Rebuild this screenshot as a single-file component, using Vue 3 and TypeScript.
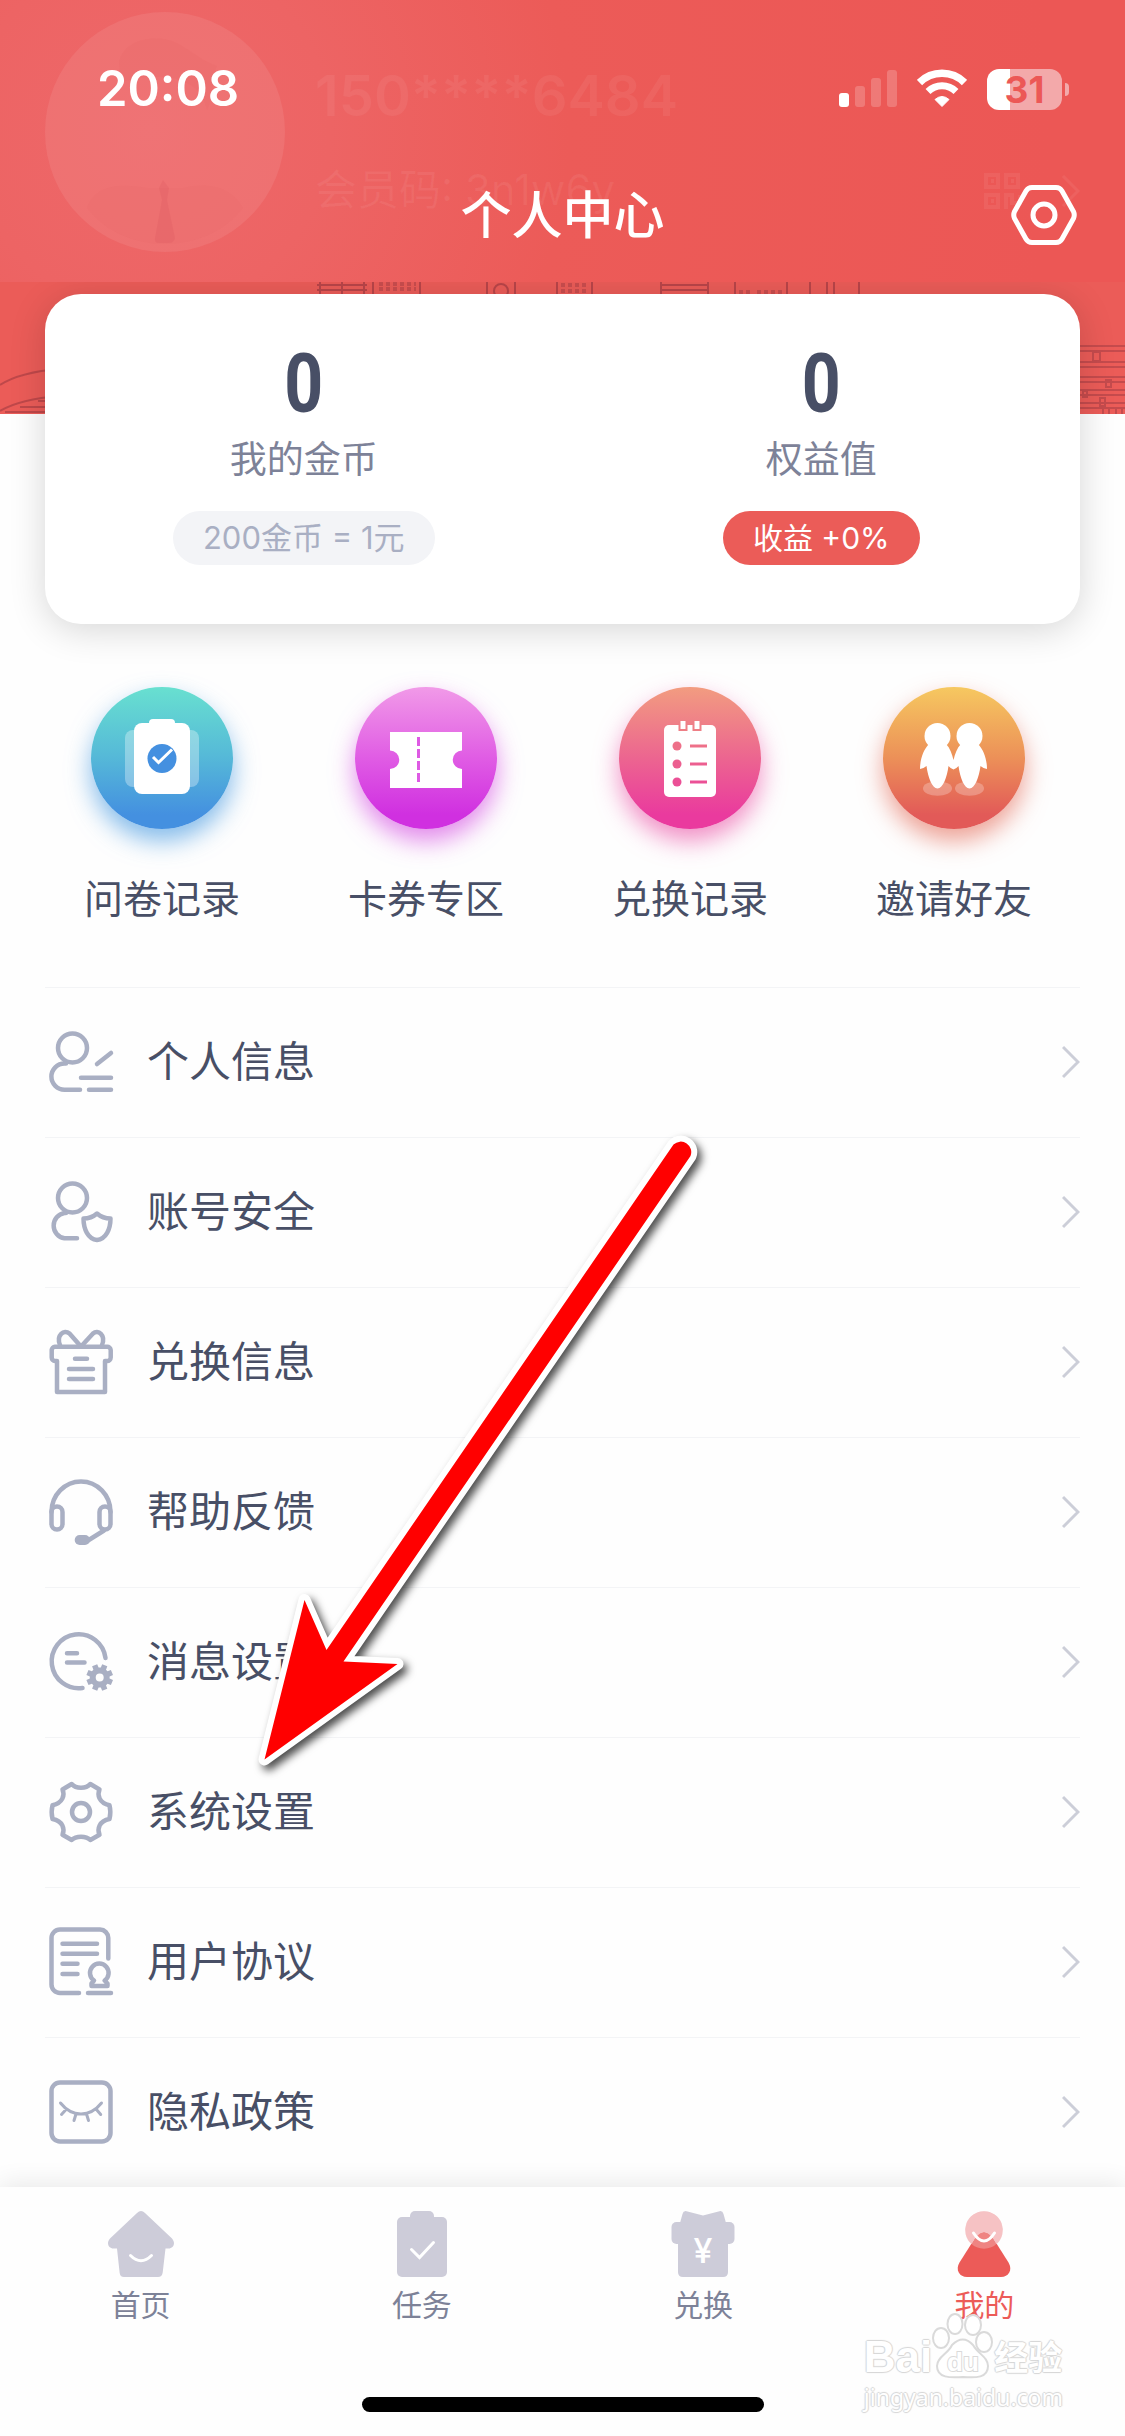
<script setup lang="ts">
interface Shape {
  d: string
  fill?: boolean
  width?: number
}

interface MenuItem {
  label: string
  shapes: Shape[]
}

interface Shortcut {
  label: string
  kind: 'survey' | 'coupon' | 'records' | 'invite'
}

interface Tab {
  label: string
  kind: 'home' | 'task' | 'swap' | 'mine'
}

const circle = (cx: number, cy: number, r: number): string =>
  `M${cx - r} ${cy}a${r} ${r} 0 1 0 ${r * 2} 0a${r} ${r} 0 1 0 ${-r * 2} 0Z`

const cog = (cx: number, cy: number, outer: number, inner: number, teeth: number): string => {
  const step = (Math.PI * 2) / teeth
  const points: string[] = []
  for (let i = 0; i < teeth; i++) {
    const angle = i * step + step / 2
    const corners: [number, number][] = [
      [-0.36, inner],
      [-0.26, outer],
      [0.26, outer],
      [0.36, inner],
    ]
    for (const [offset, radius] of corners) {
      const a = angle + offset * step
      points.push(`${(cx + Math.cos(a) * radius).toFixed(1)} ${(cy + Math.sin(a) * radius).toFixed(1)}`)
    }
  }
  return `M${points.join('L')}Z`
}

const shortcuts: Shortcut[] = [
  { label: '问卷记录', kind: 'survey' },
  { label: '卡券专区', kind: 'coupon' },
  { label: '兑换记录', kind: 'records' },
  { label: '邀请好友', kind: 'invite' },
]

const menu: MenuItem[] = [
  {
    label: '个人信息',
    shapes: [
      { d: circle(27.5, 22, 14.5) },
      { d: 'M21 37.5H19.5A13 13 0 0 0 19.5 63.7H35M36 51.7H66M44 63.7H66M52 38L66 27' },
    ],
  },
  {
    label: '账号安全',
    shapes: [
      { d: circle(27.5, 22, 14.5) },
      { d: 'M21 37H19.5A12.8 12.8 0 0 0 19.5 62.3H32' },
      { d: 'M52 37.5C48 41 43.500 42.500 38.500 42.500C38.500 53 43 63 52 64C61 63 65.500 53 65.500 42.500C60.500 42.500 56 41 52 37.500Z' },
    ],
  },
  {
    label: '兑换信息',
    shapes: [
      { d: 'M12 35H10A3.500 3.500 0 0 1 6.700 31.500V24A3.500 3.500 0 0 1 10 20.700H62A3.500 3.500 0 0 1 65.700 24V31.500A3.500 3.500 0 0 1 62 35H60V66H12Z' },
      { d: 'M35.500 20L24.500 7.500C19 3 11 9 15 19M36.500 20L48 7.500C53 3 61 9 57 19' },
      { d: 'M30 32.700H42M24 43H48M24 53H48' },
    ],
  },
  {
    label: '帮助反馈',
    shapes: [
      { d: 'M6.500 36A29.500 30.500 0 0 1 65.500 36' },
      { d: 'M12 30.500A5.500 5.500 0 0 1 17.500 36V48A5.500 5.500 0 0 1 12 53.500A5.500 5.500 0 0 1 6.500 48V36A5.500 5.500 0 0 1 12 30.500Z' },
      { d: 'M60 30.500A5.500 5.500 0 0 1 65.500 36V48A5.500 5.500 0 0 1 60 53.500A5.500 5.500 0 0 1 54.500 48V36A5.500 5.500 0 0 1 60 30.500Z' },
      { d: 'M59 54.500L43 64.500' },
      { d: 'M34.700 59H40A5 5 0 0 1 40 69H34.700A5 5 0 0 1 34.700 59Z', fill: true },
    ],
  },
  {
    label: '消息设置',
    shapes: [
      { d: 'M60.500 32A27 27 0 1 0 37.500 62' },
      { d: 'M22 27.300H32M22 36.500H39.500' },
      { d: cog(54.7, 51.5, 13.5, 10, 8) + circle(54.7, 51.5, 4), fill: true },
    ],
  },
  {
    label: '系统设置',
    shapes: [
      {
        d: 'M26.700 8L17.500 13.500C20 19 18 27 7.500 29.300C6.300 34 6.300 38 7.500 43C18 45 20 53 17.500 58.700L26.700 64C31 59.500 41 59.500 45.300 64L54.500 58.700C52 53 54 45 64.500 43C65.700 38 65.700 34 64.500 29.300C54 27 52 19 54.500 13.500L45.300 8C41 13 31 13 26.700 8Z',
      },
      { d: circle(36, 36, 9) },
    ],
  },
  {
    label: '用户协议',
    shapes: [
      { d: 'M63.300 32.500V12A8.500 8.500 0 0 0 55 3.500H15A8.500 8.500 0 0 0 6.500 12V58.500A8.500 8.500 0 0 0 15 67H34M43 67H66M17.500 17.700H52M17.500 27.700H52M17.500 37.700H32.500M17.500 48H32.500' },
      { d: 'M49 54.500A9.300 9.300 0 1 1 59.600 54.500L62.500 57.500V60H46.500V57.500Z' },
    ],
  },
  {
    label: '隐私政策',
    shapes: [
      { d: 'M15 6.500H57A8.500 8.500 0 0 1 65.500 15V57A8.500 8.500 0 0 1 57 65.500H15A8.500 8.500 0 0 1 6.500 57V15A8.500 8.500 0 0 1 15 6.500Z' },
      { d: 'M15.500 27C27 41.500 45 41.500 56.500 27M21.500 33L16.500 38.500M31 38L29 44.500M41.500 38L43.500 44.500M51 33L55.700 38.500', width: 3 },
    ],
  },
]

const tabs: Tab[] = [
  { label: '首页', kind: 'home' },
  { label: '任务', kind: 'task' },
  { label: '兑换', kind: 'swap' },
  { label: '我的', kind: 'mine' },
]
</script>

<template>
  <div class="page">
    <header class="top">
      <div class="profile" aria-hidden="true">
        <svg class="avatar" viewBox="0 0 240 240">
          <circle cx="120" cy="120" r="120" fill="#ffffff" fill-opacity=".08" />
          <path d="M74 52C76 28 110 20 134 32C150 42 160 50 172 54C166 66 170 84 162 98C156 66 120 58 76 70Z" fill="#e25558" fill-opacity=".1" />
          <path d="M42 196C50 170 80 172 104 176H138C170 168 190 180 198 196C180 220 150 232 120 232C90 232 60 220 42 196Z" fill="#e25558" fill-opacity=".06" />
          <path d="M118 168L124 176L122 188L130 226Q129 231 124 231H114Q109 231 110 226L117 188L114 176Z" fill="#d9505a" fill-opacity=".2" />
        </svg>
        <div class="who">
          <span class="phone">150****6484</span>
          <span class="code">会员码: 3n1w6y</span>
        </div>
        <svg class="qr" viewBox="0 0 96 36" fill="none" stroke="#ffffff" stroke-width="4">
          <path d="M2 2h12v12h-12zM22 2h12v12h-12zM2 22h12v12h-12zM22 36v-14h6v8h8v-8M7 8h3M27 8h3M7 28h3" />
          <path d="M79 3l15 15l-15 15" stroke-width="3" />
        </svg>
      </div>

      <div class="status">
        <span class="clock">20:08</span>
        <div class="signals">
          <svg width="58" height="42" viewBox="0 0 58 42" fill="#ffffff">
            <rect x="0" y="25" width="10" height="14" rx="3" />
            <g fill-opacity=".2">
              <rect x="16" y="18" width="10" height="21" rx="3" />
              <rect x="32" y="10" width="10" height="29" rx="3" />
              <rect x="48" y="2" width="10" height="37" rx="3" />
            </g>
          </svg>
          <svg width="50" height="42" viewBox="0 0 50 42">
            <path d="M2.500 14.500A32 32 0 0 1 47.500 14.500" fill="none" stroke="#ffffff" stroke-width="7.500" />
            <path d="M11 23.500A20 20 0 0 1 39 23.500" fill="none" stroke="#ffffff" stroke-width="7" />
            <path d="M25 38.500L18 31.500Q25 25.500 32 31.500Z" fill="#ffffff" stroke="#ffffff" stroke-width="1" stroke-linejoin="round" />
          </svg>
          <div class="battery"><span>31</span></div>
        </div>
      </div>

      <div class="bar">
        <h1>个人中心</h1>
        <button class="gear" type="button" aria-label="设置">
          <svg width="66" height="60" viewBox="0 0 66 60" fill="none" stroke="#ffffff" stroke-width="5">
            <path d="M21 2.500H45Q49 2.500 51 6L62.500 26.500Q64 30 62.500 33.500L51 54Q49 57.500 45 57.500H21Q17 57.500 15 54L3.500 33.500Q2 30 3.500 26.500L15 6Q17 2.500 21 2.500Z" />
            <circle cx="33" cy="30" r="11" />
          </svg>
        </button>
      </div>
    </header>

    <div class="skyline" aria-hidden="true">
      <svg width="60" height="132" viewBox="0 0 60 132" fill="none" stroke="#7d2a38" stroke-opacity=".4" stroke-width="2">
        <path d="M0 103Q20 90 60 87M0 129Q20 117 60 114M5 130H45M20 125H45M38 119H50" />
      </svg>
      <svg width="624" height="12" viewBox="-64 0 624 12" fill="none" stroke="#7d2a38" stroke-opacity=".45" stroke-width="2">
        <path d="M5 0V12M27 0V12M49 0V12M2 3H52M2 8H52M58 0V12M105 0V12M172 0V12M200 0V12M242 0V12M277 0V12M346 0V12M393 0V12M347 3H392M347 8H392M420 0V12M472 0V12M495 0V12M512 0V12M519 0V12M544 0V12" />
        <path d="M64 2H101M64 7H101M246 3H274M246 9H274M424 10H438M442 10H470" stroke-dasharray="4 3" stroke-width="4" stroke-opacity=".3" />
        <circle cx="186" cy="9" r="7" />
      </svg>
      <svg width="60" height="132" viewBox="0 0 60 132" fill="none" stroke="#7d2a38" stroke-opacity=".35" stroke-width="2">
        <path d="M0 64H60M0 69H60M0 80H60M0 85H60M0 95H60M0 100H60M0 108H60M0 113H60M0 121H60M0 126H60M28 70h7v9h-7zM41 98h5v7h-5zM18 109h4v6h-4zM35 116h5v8h-5zM38 127v5M44 127v5M51 127v5M57 127v5" />
      </svg>
    </div>

    <main>
      <section class="card">
        <div class="stat">
          <strong>0</strong>
          <span class="name">我的金币</span>
          <span class="pill rate">200金币 = 1元</span>
        </div>
        <div class="stat">
          <strong>0</strong>
          <span class="name">权益值</span>
          <span class="pill hot">收益 +0%</span>
        </div>
      </section>

      <nav class="shortcuts">
        <a v-for="item in shortcuts" :key="item.kind" href="#">
          <span class="disc" :class="item.kind">
            <svg v-if="item.kind === 'survey'" viewBox="0 0 142 142" fill="#ffffff">
              <rect x="34" y="43" width="74" height="57" rx="8" fill-opacity=".32" />
              <rect x="43" y="36" width="56" height="71" rx="8" />
              <rect x="58" y="32" width="26" height="12" rx="4" />
              <circle cx="71" cy="71.500" r="14.500" fill="#4490e0" />
              <path d="M62 70L67.500 75.500L81 62.500" fill="none" stroke="#ffffff" stroke-width="3" />
            </svg>
            <svg v-else-if="item.kind === 'coupon'" viewBox="0 0 142 142">
              <path d="M35 45H107V63.500A9.200 9.200 0 0 0 107 82V101H35V82A9.200 9.200 0 0 0 35 63.500Z" fill="#ffffff" />
              <path d="M63.500 50V95" stroke="#de5ae4" stroke-width="3" stroke-dasharray="9 3" />
            </svg>
            <svg v-else-if="item.kind === 'records'" viewBox="0 0 142 142">
              <rect x="45" y="38" width="52" height="72" rx="5" fill="#ffffff" />
              <g fill="#ffffff" stroke="#ee7f86" stroke-width="2">
                <path d="M60.500 34V43H67.500V34M74.500 34V43H81.500V34" />
              </g>
              <circle cx="58" cy="59" r="4.500" fill="#ee7089" />
              <circle cx="58" cy="77" r="4.500" fill="#ec5f90" />
              <circle cx="58" cy="95" r="4.500" fill="#eb5096" />
              <path d="M71 59H88" stroke="#ee7089" stroke-width="3" />
              <path d="M71 77H88" stroke="#ec5f90" stroke-width="3" />
              <path d="M71 95H88" stroke="#eb5096" stroke-width="3" />
            </svg>
            <svg v-else viewBox="0 0 142 142" fill="#ffffff">
              <ellipse cx="54.500" cy="101.500" rx="14.500" ry="7.300" fill-opacity=".25" />
              <ellipse cx="86.500" cy="101.500" rx="14.500" ry="7.300" fill-opacity=".25" />
              <circle cx="54.500" cy="49" r="13" />
              <circle cx="86.500" cy="49" r="13" />
              <path d="M46 57C40 63 37 73 37 82Q40 82 43.500 79C45 90 49 101.500 54.500 101.500C60 101.500 64 90 65.500 79Q68 82 70.500 82.500Q73 82 75.500 79C77 90 81 101.500 86.500 101.500C92 101.500 96 90 97.500 79Q101 82 104 82C104 73 101 63 95 57H78C74 61 72 67 70.500 73C69 67 67 61 63 57Z" />
            </svg>
          </span>
          <span>{{ item.label }}</span>
        </a>
      </nav>

      <ul class="menu">
        <li v-for="item in menu" :key="item.label">
          <a href="#">
            <svg class="glyph" viewBox="0 0 72 72" stroke-linecap="round" stroke-linejoin="round">
              <path
                v-for="(shape, index) in item.shapes"
                :key="index"
                :d="shape.d"
                :fill="shape.fill ? '#a9afc3' : 'none'"
                fill-rule="evenodd"
                :stroke="shape.fill ? 'none' : '#a9afc3'"
                :stroke-width="shape.width ?? 4.5"
              />
            </svg>
            <span>{{ item.label }}</span>
            <svg class="chevron" width="18" height="34" viewBox="0 0 18 34" fill="none" stroke="#ccced8" stroke-width="3">
              <path d="M1 2L16 17L1 32" />
            </svg>
          </a>
        </li>
      </ul>
    </main>

    <footer class="dock">
      <nav class="tabs">
        <a v-for="tab in tabs" :key="tab.kind" href="#" :class="{ active: tab.kind === 'mine' }">
          <svg v-if="tab.kind === 'home'" viewBox="0 0 66 66" fill="#cdccd9">
            <path d="M29 2Q33 -2 37 2L64 27.500C68 32 65.500 37.500 60.500 37.500H57.500L54.700 61.500Q54 66 50 66H16Q12 66 11.600 61.500L9 37.500H5.500C.5 37.500 -2 32 2 27.500Z" />
            <path d="M22.500 44.500Q33 55 43.500 44.500" fill="none" stroke="#ffffff" stroke-width="3" stroke-linecap="round" />
          </svg>
          <svg v-else-if="tab.kind === 'task'" viewBox="0 0 66 66" fill="#cdccd9">
            <rect x="8" y="6" width="50" height="60" rx="5" />
            <rect x="21" y="0" width="24" height="12" rx="5" />
            <path d="M22.500 38.500L30.500 46.500L44.500 31.500" fill="none" stroke="#ffffff" stroke-width="3" stroke-linecap="round" />
          </svg>
          <svg v-else-if="tab.kind === 'swap'" viewBox="0 0 66 66" fill="#cdccd9">
            <path d="M8 30H58V61Q58 66 53 66H13Q8 66 8 61Z" />
            <rect x="1.500" y="11" width="63" height="22" rx="5" />
            <path d="M10 12L12.500 3Q13.500 -1 17.500 .5L33 4.500L48.500 .5Q52.500 -1 53.500 3L56 12Z" />
            <text x="33" y="52" text-anchor="middle" class="yen">¥</text>
          </svg>
          <svg v-else viewBox="0 0 66 66">
            <path d="M24 27Q33 15 42 27L57.500 51.500C62 59 57.500 66 50 66H16C8.500 66 4 59 8.500 51.500Z" fill="#ec5b58" />
            <circle cx="33" cy="19" r="18.800" fill="#f6c2c4" fill-opacity=".4" />
            <path d="M33 .2A18.800 18.800 0 0 0 20.500 33L24 27Q33 15 42 27L45.500 33A18.800 18.800 0 0 0 33 .2Z" fill="#f6c2c4" />
            <path d="M22.500 22Q33 38 43.500 22" fill="none" stroke="#ffffff" stroke-width="3" stroke-linecap="round" />
          </svg>
          <span>{{ tab.label }}</span>
        </a>
      </nav>
      <div class="home-bar"></div>
      <div class="mark">
        <div class="mark-name">
          <span class="latin">Bai</span>
          <svg width="62" height="68" viewBox="0 0 62 68" fill="#ffffff" stroke="#dadada" stroke-width="2">
            <ellipse cx="9" cy="26" rx="8" ry="10" />
            <ellipse cx="23" cy="12" rx="7.500" ry="10" />
            <ellipse cx="41" cy="13" rx="8" ry="10" />
            <ellipse cx="52" cy="30" rx="8" ry="10" />
            <path d="M20 33Q31 22 41 33C46 42 56 45 56 54C56 66 44 66 31 65C18 66 5 66 5 54C5 45 16 42 20 33Z" />
            <text x="31" y="59" text-anchor="middle" class="du">du</text>
          </svg>
          <span class="han">经验</span>
        </div>
        <span class="mark-site">jingyan.baidu.com</span>
      </div>
    </footer>

    <svg class="arrow" width="480" height="670" viewBox="240 1120 480 670" aria-hidden="true">
      <path
        d="M264.500 1759.500L304.500 1600L326.500 1650L673.500 1144.500A10.500 10.500 0 0 1 690.500 1156L343.500 1661.500L397.500 1664Z"
        fill="#ff0000"
        stroke="#ffffff"
        stroke-width="12"
        stroke-linejoin="round"
        paint-order="stroke"
      />
    </svg>
  </div>
</template>

<style>
body {
  margin: 0;
  background: #fefefe;
}
</style>

<style scoped>
.page {
  position: relative;
  display: flex;
  flex-direction: column;
  min-height: 100vh;
  overflow: hidden;
  background: #fefefe;
  color: #484f66;
  font-family: Inter, 'Noto Sans CJK SC', sans-serif;
}

a {
  color: inherit;
  text-decoration: none;
}

.top {
  position: relative;
  z-index: 2;
  height: 282px;
  color: #ffffff;
  background: radial-gradient(circle at 150px 130px, #ee686a 0, #ed6464 180px, #ec5b58 420px, #ec5755 900px);
}

.profile {
  position: absolute;
  top: 12px;
  left: 45px;
  right: 45px;
  display: flex;
  align-items: flex-start;
}

.avatar {
  width: 240px;
  height: 240px;
}

.who {
  flex: 1;
  display: flex;
  flex-direction: column;
  gap: 28px;
  margin: 48px 0 0 30px;
  color: rgba(255, 255, 255, 0.06);
}

.phone {
  font-size: 56px;
  line-height: 72px;
  font-weight: 600;
}

.code {
  font-size: 42px;
  line-height: 60px;
}

.qr {
  width: 96px;
  height: 36px;
  margin-top: 161px;
  opacity: 0.06;
}

.status {
  position: relative;
  display: flex;
  justify-content: space-between;
  align-items: center;
  height: 92px;
  padding: 43px 56px 15px 97px;
}

.clock {
  font-size: 49px;
  line-height: 60px;
  font-weight: 600;
}

.signals {
  display: flex;
  align-items: center;
  gap: 20px;
}

.battery {
  position: relative;
  width: 75px;
  height: 41px;
  margin-right: 7px;
  border-radius: 12px;
  background: linear-gradient(90deg, #ffffff 23px, #f3a9aa 23px);
  color: #ec5856;
  font-size: 37px;
  line-height: 41px;
  font-weight: 700;
  text-align: center;
}

.battery::after {
  content: '';
  position: absolute;
  top: 14px;
  right: -7px;
  width: 4px;
  height: 13px;
  border-radius: 0 6px 6px 0;
  background: #f3a9aa;
}

.bar {
  position: relative;
  display: flex;
  align-items: center;
  justify-content: flex-end;
  height: 130px;
  padding: 0 48px;
}

.bar h1 {
  flex: 1;
  margin: 0;
  padding: 2px 0 0 66px;
  font-size: 51px;
  line-height: 60px;
  font-weight: 500;
  text-align: center;
}

.gear {
  display: flex;
  padding: 0;
  border: 0;
  background: none;
}

.skyline {
  position: relative;
  display: flex;
  justify-content: space-between;
  align-items: flex-start;
  height: 132px;
  margin-bottom: -120px;
  background: #eb5c58;
}

main {
  position: relative;
  flex: 1;
}

.card {
  display: flex;
  margin: 0 45px;
  padding: 46px 0 59px;
  border-radius: 36px;
  background: #ffffff;
  box-shadow: 0 6px 36px rgba(0, 0, 0, 0.16);
}

.stat {
  flex: 1;
  display: flex;
  flex-direction: column;
  align-items: center;
}

.stat strong {
  font-family: 'Liberation Sans Narrow', 'Roboto Condensed', Roboto, sans-serif;
  font-size: 78px;
  line-height: 88px;
  font-weight: 400;
  -webkit-text-stroke: 3px #484f66;
}

.name {
  margin: 5px 0 24px;
  color: #7d8298;
  font-size: 37px;
  line-height: 54px;
}

.pill {
  padding: 0 30px;
  border-radius: 27px;
  background: #f3f4f7;
  color: #a9afc3;
  font-size: 30px;
  line-height: 54px;
}

.pill.rate {
  font-size: 31px;
}

.pill.hot {
  background: #eb5c58;
  color: #ffffff;
}

.shortcuts {
  display: flex;
  padding: 63px 39px 58px 30px;
}

.shortcuts a {
  flex: 1;
  display: flex;
  flex-direction: column;
  align-items: center;
  gap: 40px;
  font-size: 39px;
  line-height: 60px;
}

.disc {
  width: 142px;
  height: 142px;
  border-radius: 50%;
}

.disc svg {
  display: block;
}

.disc.survey {
  background: linear-gradient(#68e0d0, #55b8d8 50%, #4490e0 90%);
  box-shadow: 0 12px 24px rgba(68, 152, 224, 0.65);
}

.disc.coupon {
  background: linear-gradient(#f19ae8, #e05ce4 50%, #d030e0 90%);
  box-shadow: 0 12px 24px rgba(208, 60, 224, 0.6);
}

.disc.records {
  background: linear-gradient(#f29c80, #ec6590 50%, #ea3a9e 90%);
  box-shadow: 0 12px 24px rgba(234, 70, 160, 0.6);
}

.disc.invite {
  background: linear-gradient(#f6c860, #ec9058 50%, #e25a58 90%);
  box-shadow: 0 12px 24px rgba(226, 100, 80, 0.6);
}

.menu {
  margin: 0;
  padding: 0 45px;
  list-style: none;
}

.menu a {
  display: flex;
  align-items: center;
  height: 147px;
  padding-bottom: 2px;
  border-top: 1px solid #f3f4f6;
  font-size: 42px;
  line-height: 60px;
}

.menu span {
  flex: 1;
}

.glyph {
  width: 72px;
  height: 72px;
  margin-right: 30px;
}

.dock {
  position: relative;
  background: #fefefe;
  box-shadow: 0 -3px 24px rgba(0, 0, 0, 0.09);
}

.tabs {
  display: flex;
  padding-top: 24px;
}

.tabs a {
  flex: 1;
  display: flex;
  flex-direction: column;
  align-items: center;
  gap: 6px;
  color: #7d8298;
  font-size: 30px;
  line-height: 44px;
}

.tabs .active {
  color: #ec5b58;
}

.tabs svg {
  width: 66px;
  height: 66px;
}

.yen {
  fill: #ffffff;
  font-size: 34px;
  font-weight: 500;
}

.home-bar {
  width: 402px;
  height: 15px;
  margin: 70px auto 24px;
  border-radius: 8px;
  background: #000000;
}

.mark {
  position: absolute;
  right: 62px;
  bottom: 22px;
  color: #ffffff;
  text-shadow: 1px 0 1px #d6d6d6, -1px 0 1px #d6d6d6, 0 1px 1px #d6d6d6, 0 -1px 1px #d6d6d6;
}

.mark-name {
  display: flex;
  align-items: flex-end;
}

.latin {
  font-family: 'Liberation Sans', sans-serif;
  font-size: 44px;
  line-height: 46px;
  font-weight: 700;
}

.han {
  font-size: 34px;
  line-height: 44px;
  font-weight: 700;
}

.du {
  font-family: 'Liberation Sans', sans-serif;
  font-size: 26px;
  font-weight: 700;
  paint-order: stroke;
  text-shadow: none;
}

.mark-site {
  display: block;
  font-family: 'Noto Sans', sans-serif;
  font-size: 23px;
  line-height: 34px;
}

.arrow {
  position: absolute;
  top: 1120px;
  left: 240px;
  filter: drop-shadow(4px 5px 4px rgba(0, 0, 0, 0.7));
  pointer-events: none;
}
</style>
